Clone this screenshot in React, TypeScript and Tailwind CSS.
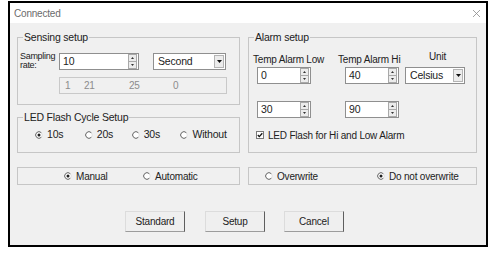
import React from 'react';

function Radio({ checked }: { checked?: boolean }) {
  return (
    <svg width="8" height="8" viewBox="0 0 8 8" className="shrink-0">
      <circle cx="4" cy="4" r="3.3" fill="#fff" stroke="#e0e0e0" strokeWidth="1" />
      <path d="M6.3 1.7 A3.3 3.3 0 1 0 6.3 6.3" fill="none" stroke="#6e6e6e" strokeWidth="1" />
      {checked && <circle cx="4" cy="4" r="1.5" fill="#1e1e1e" />}
    </svg>
  );
}

function RadioItem({ label, checked, width }: { label: string; checked?: boolean; width: string }) {
  return (
    <div className={`flex items-center gap-[4px] ${width}`}>
      <Radio checked={checked} />
      <span>{label}</span>
    </div>
  );
}

function Spinner() {
  return (
    <div className="my-auto mr-[1px] flex h-[15px] w-[9px] shrink-0 flex-col border border-[#a9a9a9] bg-[#ececec]">
      <div className="flex flex-1 items-center justify-center border-b border-[#a9a9a9]">
        <svg width="3" height="2" viewBox="0 0 3 2">
          <path d="M1.5 0 L3 2 L0 2Z" fill="#333" />
        </svg>
      </div>
      <div className="flex flex-1 items-center justify-center">
        <svg width="3" height="2" viewBox="0 0 3 2">
          <path d="M0 0 L3 0 L1.5 2Z" fill="#333" />
        </svg>
      </div>
    </div>
  );
}

function SpinBox({ value, width }: { value: string; width: string }) {
  return (
    <div className={`flex h-[17px] shrink-0 border border-[#8f8f8f] bg-white ${width}`}>
      <span className="flex-1 pl-[3px] text-[10.5px] leading-[15px]">{value}</span>
      <Spinner />
    </div>
  );
}

function Select({ value, width }: { value: string; width: string }) {
  return (
    <div className={`flex h-[17px] shrink-0 border border-[#8f8f8f] bg-white ${width}`}>
      <span className="flex-1 pl-[4px] text-[10.5px] leading-[15px]">{value}</span>
      <div className="my-[1px] mr-[1px] flex w-[10px] items-center justify-center border border-[#b4b4b4] bg-[#ececec]">
        <svg width="5" height="3" viewBox="0 0 5 3">
          <path d="M0 0 L5 0 L2.5 3Z" fill="#111" />
        </svg>
      </div>
    </div>
  );
}

function Group({ title, className, children }: { title: string; className: string; children: React.ReactNode }) {
  return (
    <div className={`flex flex-col border border-[#c6c6c6] ${className}`}>
      <span className="-mt-[7px] ml-[5px] self-start bg-[#f0f0f0] px-[1px] text-[10.5px] leading-[12px]">{title}</span>
      {children}
    </div>
  );
}

function Button({ label }: { label: string }) {
  return (
    <button className="h-[21px] w-[60px] border border-t-[#dcdcdc] border-l-[#dcdcdc] border-r-[#5e5e5e] border-b-[#9c9c9c] bg-[#efefef] text-[10px] text-[#222]">
      {label}
    </button>
  );
}

export default function App() {
  return (
    <div className="h-[257px] w-[493px] bg-white pt-[1px] pl-[8px] font-['Liberation_Sans',Arial,sans-serif] text-[10px] tracking-[-0.2px] text-[#222]">
      <div className="flex h-[246px] w-[480px] flex-col border-2 border-black bg-[#f0f0f0]">
        {/* title bar */}
        <div className="flex h-[20px] shrink-0 items-center justify-between bg-white pl-[4px] pr-[6px]">
          <span className="text-[#6b6b6b]">Connected</span>
          <svg width="7" height="7" viewBox="0 0 7 7">
            <path d="M0 0 L7 7 M7 0 L0 7" stroke="#8a8a8a" strokeWidth="0.8" />
          </svg>
        </div>

        <div className="flex gap-[8px] pt-[14px] pl-[7px] pr-[9px]">
          {/* left column */}
          <div className="flex w-[223px] flex-col">
            <Group title="Sensing setup" className="h-[68px]">
              <div className="mt-[10px] flex items-start">
                <div className="-mt-[1px] ml-[2px] w-[39px] text-[9px] leading-[9px] tracking-[-0.3px]">
                  Sampling
                  <br />
                  rate:
                </div>
                <SpinBox value="10" width="w-[80px]" />
                <div className="ml-[14px]">
                  <Select value="Second" width="w-[73px]" />
                </div>
              </div>
              <div className="mt-[7px] ml-[41px] flex h-[17px] w-[168px] items-center border border-[#c9c9c9] pl-[5px] text-[#8c8c8c]">
                <span className="w-[19px]">1</span>
                <span className="w-[45px]">21</span>
                <span className="w-[44px]">25</span>
                <span>0</span>
              </div>
            </Group>

            <Group title="LED Flash Cycle Setup" className="mt-[12px] h-[36px]">
              <div className="mt-[6px] ml-[17px] flex h-[12px] text-[10.5px]">
                <RadioItem label="10s" checked width="w-[51px]" />
                <RadioItem label="20s" width="w-[48px]" />
                <RadioItem label="30s" width="w-[50px]" />
                <RadioItem label="Without" width="w-[60px]" />
              </div>
            </Group>

            <div className="mt-[14px] flex h-[18px] items-center border border-[#c6c6c6] pl-[46px]">
              <RadioItem label="Manual" checked width="w-[79px]" />
              <RadioItem label="Automatic" width="w-[80px]" />
            </div>
          </div>

          {/* right column */}
          <div className="flex w-[230px] flex-col">
            <Group title="Alarm setup" className="h-[116px]">
              <div className="mt-[11px] flex h-[12px] text-[10px] leading-[12px]">
                <span className="ml-[4px] w-[85px]">Temp Alarm Low</span>
                <span className="w-[91px]">Temp Alarm Hi</span>
                <span className="-mt-[3px]">Unit</span>
              </div>
              <div className="mt-[1px] flex">
                <div className="ml-[8px]">
                  <SpinBox value="0" width="w-[54px]" />
                </div>
                <div className="ml-[34px]">
                  <SpinBox value="40" width="w-[54px]" />
                </div>
                <div className="ml-[6px]">
                  <Select value="Celsius" width="w-[60px]" />
                </div>
              </div>
              <div className="mt-[17px] flex">
                <div className="ml-[8px]">
                  <SpinBox value="30" width="w-[54px]" />
                </div>
                <div className="ml-[34px]">
                  <SpinBox value="90" width="w-[54px]" />
                </div>
              </div>
              <div className="mt-[11px] ml-[7px] flex h-[12px] items-center gap-[4px] text-[10px]">
                <svg width="8" height="8" viewBox="0 0 8 8" className="shrink-0">
                  <rect x="0.5" y="0.5" width="7" height="7" fill="#fff" stroke="#7a7a7a" />
                  <path d="M1.8 4 L3.3 5.6 L6.3 2.2" fill="none" stroke="#111" strokeWidth="1.3" />
                </svg>
                <span>LED Flash for Hi and Low Alarm</span>
              </div>
            </Group>

            <div className="mt-[14px] flex h-[18px] items-center border border-[#c6c6c6] pl-[16px]">
              <RadioItem label="Overwrite" width="w-[112px]" />
              <RadioItem label="Do not overwrite" checked width="w-[90px]" />
            </div>
          </div>
        </div>

        <div className="mt-[26px] flex pl-[115px]">
          <Button label="Standard" />
          <div className="ml-[20px]">
            <Button label="Setup" />
          </div>
          <div className="ml-[19px]">
            <Button label="Cancel" />
          </div>
        </div>
      </div>
    </div>
  );
}
